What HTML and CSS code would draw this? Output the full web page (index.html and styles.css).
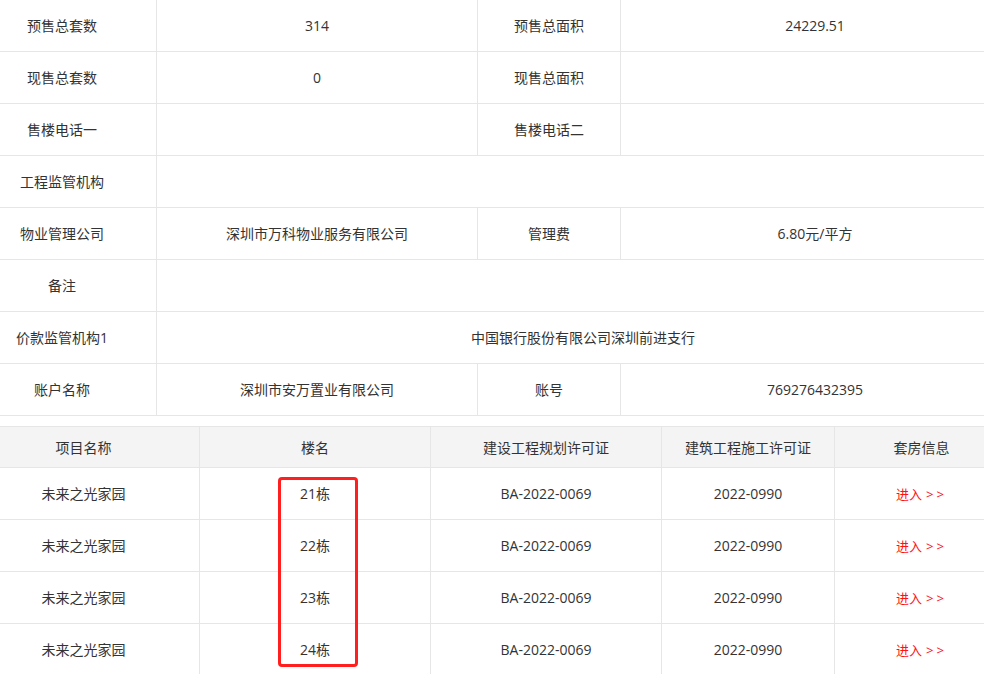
FILE: index.html
```html
<!DOCTYPE html>
<html lang="zh-CN">
<head>
<meta charset="utf-8">
<title>项目信息</title>
<link rel="stylesheet" href="styles.css">
</head>
<body>
<div class="page">
  <div class="info">
    <div class="c">预售总套数</div>
    <div class="c">314</div>
    <div class="c">预售总面积</div>
    <div class="c last">24229.51</div>

    <div class="c">现售总套数</div>
    <div class="c">0</div>
    <div class="c">现售总面积</div>
    <div class="c last"></div>

    <div class="c">售楼电话一</div>
    <div class="c"></div>
    <div class="c">售楼电话二</div>
    <div class="c last"></div>

    <div class="c">工程监管机构</div>
    <div class="c span3"></div>

    <div class="c">物业管理公司</div>
    <div class="c">深圳市万科物业服务有限公司</div>
    <div class="c">管理费</div>
    <div class="c last">6.80元/平方</div>

    <div class="c">备注</div>
    <div class="c span3"></div>

    <div class="c">价款监管机构1</div>
    <div class="c span3">中国银行股份有限公司深圳前进支行</div>

    <div class="c">账户名称</div>
    <div class="c">深圳市安万置业有限公司</div>
    <div class="c">账号</div>
    <div class="c last">769276432395</div>
  </div>

  <div class="bld">
    <div class="h">项目名称</div>
    <div class="h">楼名</div>
    <div class="h">建设工程规划许可证</div>
    <div class="h">建筑工程施工许可证</div>
    <div class="h end">套房信息</div>

    <div class="d">未来之光家园</div>
    <div class="d">21栋</div>
    <div class="d">BA-2022-0069</div>
    <div class="d">2022-0990</div>
    <div class="d end"><a class="go" href="#">进入<span class="arr">&gt;&gt;</span></a></div>

    <div class="d">未来之光家园</div>
    <div class="d">22栋</div>
    <div class="d">BA-2022-0069</div>
    <div class="d">2022-0990</div>
    <div class="d end"><a class="go" href="#">进入<span class="arr">&gt;&gt;</span></a></div>

    <div class="d">未来之光家园</div>
    <div class="d">23栋</div>
    <div class="d">BA-2022-0069</div>
    <div class="d">2022-0990</div>
    <div class="d end"><a class="go" href="#">进入<span class="arr">&gt;&gt;</span></a></div>

    <div class="d">未来之光家园</div>
    <div class="d">24栋</div>
    <div class="d">BA-2022-0069</div>
    <div class="d">2022-0990</div>
    <div class="d end"><a class="go" href="#">进入<span class="arr">&gt;&gt;</span></a></div>

    <div class="mark"></div>
  </div>
</div>
</body>
</html>
```

FILE: styles.css
```css
html, body {
  margin: 0;
  padding: 0;
  background: #fff;
  overflow: hidden;
}
body {
  font-family: "Open Sans", "Noto Sans CJK SC", sans-serif;
  font-size: 14px;
  color: #333;
}
.page {
  width: 984px;
  overflow: hidden;
}
.info {
  display: grid;
  grid-template-columns: 189px 321px 143px 388px;
  grid-auto-rows: 52px;
  width: 1041px;
  margin-left: -32px;
}
.c {
  box-sizing: border-box;
  border-right: 1px solid #e6e6e6;
  border-bottom: 1px solid #e6e6e6;
  display: flex;
  align-items: center;
  justify-content: center;
  padding-bottom: 1px;
}
.last { border-right: none; }
.span3 { grid-column: span 3; border-right: none; }

.bld {
  position: relative;
  margin-top: 10px;
  margin-left: -32px;
  width: 1040px;
  border-top: 1px solid #e6e6e6;
  display: grid;
  grid-template-columns: 232px 231px 231px 173px 173px;
  grid-template-rows: 41px repeat(4, 52px);
}
.h, .d {
  box-sizing: border-box;
  border-right: 1px solid #e6e6e6;
  border-bottom: 1px solid #e6e6e6;
  display: flex;
  align-items: center;
  justify-content: center;
}
.h { background: #f4f4f4; padding-bottom: 1px; }
.d { padding-bottom: 1px; }
.end { border-right: none; }
.go {
  color: #ff1111;
  text-decoration: none;
  font-size: 13px;
}
.arr {
  letter-spacing: 3px;
  margin-left: 4px;
}
.mark {
  position: absolute;
  left: 310px;
  top: 50px;
  width: 80px;
  height: 190px;
  box-sizing: border-box;
  border: 3px solid #ff1f1f;
  border-radius: 4px;
}
```
